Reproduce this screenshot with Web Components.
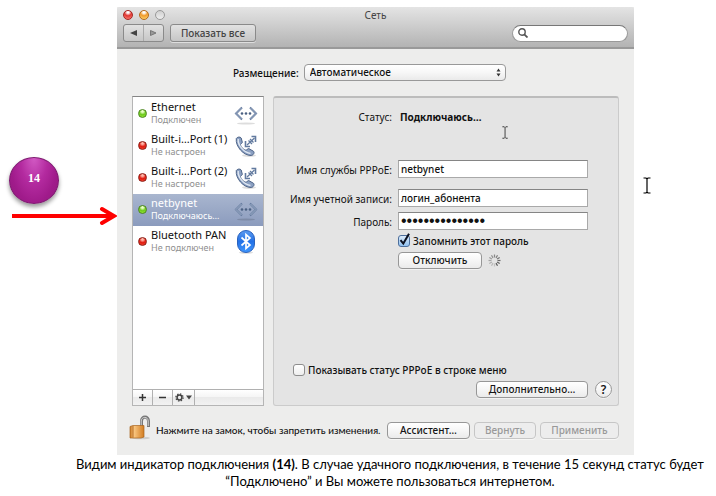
<!DOCTYPE html>
<html lang="ru">
<head>
<meta charset="utf-8">
<title>Сеть</title>
<style>
body { margin: 0; background: #fff; color: #111; font: 10px/16px "Noto Sans", "Open Sans", sans-serif; }
</style>
</head>
<body>
<guide-page></guide-page>

<script>
function define(name, html, setup) {
  customElements.define(name, class extends HTMLElement {
    connectedCallback() {
      if (this.shadowRoot) return;
      const root = this.attachShadow({ mode: 'open' });
      root.innerHTML = html;
      if (setup) setup(this, root);
    }
  });
}

/* Push button */
define('mac-button', `
<style>
:host { display: block; }
button { display: block; box-sizing: border-box; width: 100%; height: 17px; margin: 0; padding: 0 4px; border: 1px solid #979797; border-radius: 4px;
  background: linear-gradient(#fff, #f6f6f6 50%, #ebebeb); font: inherit; font-weight: 500; line-height: 15px; color: #151515; box-shadow: 0 1px 0 #fff8; text-align: center; white-space: nowrap; }
button:disabled { color: #999; border-color: #c6c6c6; background: #ededed; }
:host([kind=tool]) button { height: 18px; line-height: 16px; color: #444; border-color: #8a8a8a; border-radius: 3px; background: linear-gradient(#e2e2e2, #c6c6c6); }
:host([kind=round]) button { border-radius: 50%; padding: 0; font-size: 12px; font-weight: 600; }
</style>
<button type="button"><slot></slot></button>`, (host, root) => {
  const b = root.querySelector('button');
  b.disabled = host.hasAttribute('disabled');
});

/* Text field with a leading label */
define('mac-field', `
<style>
:host { display: grid; grid-template-columns: var(--label-col) 1fr; column-gap: 6px; align-items: center; }
label { text-align: right; white-space: nowrap; padding-top: 2px; line-height: 16px; }
input { box-sizing: border-box; width: 100%; min-width: 0; height: 18px; margin: 0; padding: 0 2px; border: 1px solid #a9a9a9; border-top-color: #858585; border-radius: 0; background: #fff; font: inherit; font-weight: 500; color: #111; outline: none; }
input[type=password] { font-size: 16px; font-family: "Liberation Sans", sans-serif; }
</style>
<label for="f"></label><input id="f">`, (host, root) => {
  root.querySelector('label').textContent = host.getAttribute('label');
  const i = root.querySelector('input');
  i.type = host.getAttribute('type') || 'text';
  i.value = host.getAttribute('value');
});

/* Tick box */
define('mac-check', `
<style>
:host { display: block; font-weight: 500; }
label { display: flex; align-items: center; gap: 3px; white-space: nowrap; }
input { appearance: none; flex: none; width: 12px; height: 12px; margin: 0; border: 1px solid #8d8d8d; border-radius: 3px; background: linear-gradient(#fff, #eee); }
input:checked { border-color: #4c6e9c; background: linear-gradient(#dcebfa, #8fc0ef); }
.box { display: grid; flex: none; }
.box > * { grid-area: 1 / 1; }
svg { display: none; width: 12px; height: 12px; overflow: visible; pointer-events: none; }
input:checked + svg { display: block; }
</style>
<label><span class="box"><input type="checkbox"><svg viewBox="0 0 12 12"><path d="M2.500 5.200L5.300 8.600L11-1.200" fill="none" stroke="#0b1020" stroke-width="2"/></svg></span><slot></slot></label>`,
(host, root) => { root.querySelector('input').checked = host.hasAttribute('checked'); });

/* Drawings of the service list */
const ICONS = {
  ethernet: `<svg width="24" height="24" viewBox="0 0 24 24"><g fill="none" stroke="#62789c" stroke-width="2"><path d="M8 5.500L2 11.500L8 17.500M16 5.500L22 11.500L16 17.500"/></g><g fill="none" stroke="#c2cfe2" stroke-width=".7"><path d="M7.500 6L2 11.500L7.500 17M16.500 6L22 11.500L16.500 17"/></g><g fill="#4c6183"><circle cx="8" cy="11.500" r="1.300"/><circle cx="12" cy="11.500" r="1.300"/><circle cx="16" cy="11.500" r="1.300"/></g><ellipse cx="12" cy="21.500" rx="9" ry="1" fill="#0002"/></svg>`,
  phone: `<svg width="24" height="24" viewBox="0 0 24 24"><ellipse cx="15" cy="21.500" rx="7" ry="1.500" fill="#0002"/><path d="M2.300 4.500C3 3 6.200 2.400 7.200 4L8.300 8.200C8.300 9.500 6.500 9.800 6.300 10.600C7 13.300 9.700 15.900 12 16.300C13 16 13.400 14.500 14.800 14.600L19.500 17.300C21 18.700 19.200 21.300 17.200 21.500C9.500 21.700 1.200 12.300 2.300 4.500Z" fill="#8ba0c2" stroke="#4e6488"/><path d="M4.200 5C3.500 11.500 10.300 18.700 16.500 19.500" fill="none" stroke="#dfe7f2" stroke-width="1.400"/><g fill="none" stroke="#627a9f" stroke-width="1.600"><path d="M11.500 7V12.500H16M17.500 2.500H21.500V8"/><path d="M13 11L20.500 4M14.500 6.500L18 10M16 5L19.500 8.500" stroke-width="1.300"/></g></svg>`,
  bluetooth: `<svg width="24" height="24" viewBox="0 0 24 24"><defs><linearGradient id="b" x2="0" y2="1"><stop stop-color="#5c9bf0"/><stop offset=".5" stop-color="#2371e6"/><stop offset="1" stop-color="#3f97ff"/></linearGradient></defs><ellipse cx="12" cy="22.500" rx="7" ry="1.300" fill="#0002"/><rect x="3.500" y=".5" width="17" height="22" rx="8.500" fill="url(#b)" stroke="#2a62bd"/><path d="M7.500 7.500L16 15L12 18.500V4.500L16 8L7.500 15.500" fill="none" stroke="#fff" stroke-width="1.700"/></svg>`
};
define('service-item', `
<style>
:host { display: grid; grid-template-columns: 12px 1fr 24px; column-gap: 3px; align-items: start; box-sizing: border-box; height: 32px; padding: 2px 5px 0 3px; }
:host([selected]) { background: linear-gradient(#a9b6cf, #8b9bbd); color: #fff; }
.led { justify-self: center; width: 7px; height: 7px; margin-top: 9px; border: 1px solid #8c1c14; border-radius: 50%; background: radial-gradient(circle at 50% 20%, #ffb9ac 0 12%, #e01b10 50%, #f54a35); }
:host([on]) .led { border-color: #49851b; background: radial-gradient(circle at 50% 20%, #eaffc8 0 12%, #6cc91a 50%, #a4f23f); }
b, small { display: block; white-space: nowrap; }
b { font-size: 11px; line-height: 14px; font-weight: 400; }
small { font-size: 9px; line-height: 11px; color: #909090; }
:host([selected]) small { color: #fff; }
.icon { margin-top: 2px; }
svg { display: block; }
</style>
<span class="led"></span><div><b></b><small></small></div><span class="icon"></span>`, (host, root) => {
  root.querySelector('b').textContent = host.getAttribute('name');
  root.querySelector('small').textContent = host.getAttribute('state');
  root.querySelector('.icon').innerHTML = ICONS[host.getAttribute('icon')];
});

/* Services column with its action bar */
define('service-list', `
<style>
:host { display: flex; flex-direction: column; box-sizing: border-box; border: 1px solid #b5b5b5; border-top-color: #858585; background: #fff; }
.items { flex: 1; padding-top: 1px; }
.bar { display: flex; height: 15px; border-top: 1px solid #b0b0b0; background: linear-gradient(#fff, #f5f5f5 48%, #eaeaea 50%, #f2f2f2); }
button { display: grid; place-items: center; width: 20px; margin: 0; padding: 0; border: 0; border-right: 1px solid #b0b0b0; background: none; }
button:last-child { width: 22px; }
</style>
<div class="items"><slot></slot></div>
<div class="bar">
<button type="button" aria-label="Добавить"><svg width="7" height="7"><path d="M0 3.500H7M3.500 0V7" stroke="#333" stroke-width="1.500"/></svg></button>
<button type="button" aria-label="Удалить"><svg width="7" height="7"><path d="M0 3.500H7" stroke="#333" stroke-width="1.500"/></svg></button>
<button type="button" aria-label="Действия"><svg width="17" height="9"><circle cx="4.500" cy="4.500" r="2.400" fill="none" stroke="#444" stroke-width="1.500"/><circle cx="4.500" cy="4.500" r="3.600" fill="none" stroke="#444" stroke-width="1.300" stroke-dasharray="1.400 1.430"/><path d="M11 2.500H17L14 6.500Z" fill="#444"/></svg></button>
</div>`);

/* I-beam pointer */
define('text-pointer', `
<style>:host { display: block; } svg { display: block; width: auto; height: var(--pointer-size, 17px); }</style>
<svg viewBox="0 0 8 17"><path d="M0.500 1H3L4 2L5 1H7.500M4 2V15M0.500 16H3L4 15L5 16H7.500" fill="none" stroke="currentColor" stroke-width="1.200"/></svg>`);

/* Busy indicator */
define('busy-spinner', `
<style>:host { display: block; } svg { display: block; }</style>
<svg width="13" height="13" viewBox="-6.500 -6.500 13 13"></svg>`, (host, root) => {
  let s = '';
  for (let i = 0; i < 12; i++) s += `<path d="M0-3V-6" stroke="#333" stroke-width="1.200" stroke-opacity="${(0.2 + 0.6 * ((i + 6) % 12) / 11).toFixed(2)}" transform="rotate(${i * 30})"/>`;
  root.querySelector('svg').innerHTML = s;
});

/* Window title bar with navigation and search */
define('window-header', `
<style>
:host { display: block; box-sizing: border-box; height: 42px; padding: 0 6px; border-bottom: 2px solid #999; background: linear-gradient(#e4e4e4, #b3b3b3); border-radius: 2px 2px 0 0; }
.title { display: grid; grid-template-columns: 1fr auto 1fr; align-items: center; height: 16px; color: #444; font-size: 10px; line-height: 16px; }
.lights { display: flex; gap: 6px; }
i { width: 8px; height: 8px; border: 1px solid #a52621; border-radius: 50%; background: radial-gradient(circle at 50% 15%, #fff 0 12%, #e23530 45%, #ff8a80); }
i:nth-child(2) { border-color: #b66a1c; background: radial-gradient(circle at 50% 15%, #fff 0 12%, #f29b2c 45%, #ffe07c); }
i:nth-child(3) { border-color: #999; background: linear-gradient(#d0d0d0, #eee); }
.tools { display: flex; align-items: center; gap: 6px; padding-top: 1px; }
.nav { display: flex; box-sizing: border-box; width: 41px; height: 18px; border: 1px solid #8a8a8a; border-radius: 3px; background: linear-gradient(#e2e2e2, #c6c6c6); }
.nav button { flex: 1; display: grid; place-items: center; padding: 0; border: 0; background: none; }
.nav button + button { box-shadow: -1px 0 #aaa; }
mac-button { width: 86px; }
.search { display: flex; align-items: center; box-sizing: border-box; width: 116px; height: 17px; margin-left: auto; padding: 0 5px; gap: 3px; border: 1px solid #999; border-top-color: #777; border-radius: 9px; background: #fff; }
.search input { flex: 1; min-width: 0; padding: 0; border: 0; background: none; font: inherit; outline: none; }
</style>
<div class="title"><span class="lights"><i></i><i></i><i></i></span><span>Сеть</span></div>
<div class="tools">
<div class="nav"><button type="button" aria-label="Назад"><svg width="7" height="6"><path d="M7 0V6L0 3Z" fill="#444"/></svg></button><button type="button" aria-label="Вперед"><svg width="7" height="6"><path d="M0.500 0.500V5.500L6 3Z" fill="#999" stroke="#777"/></svg></button></div>
<mac-button kind="tool">Показать все</mac-button>
<div class="search"><svg width="10" height="10"><circle cx="4" cy="4" r="3.200" fill="none" stroke="#555" stroke-width="1.400"/><path d="M6.300 6.300L9.500 9.500" stroke="#555" stroke-width="1.800"/></svg><input type="search" aria-label="Поиск"></div>
</div>`);

/* Placement pop-up */
define('place-select', `
<style>
:host { display: flex; align-items: center; gap: 5px; }
label { font-weight: 500; }
.wrap { display: grid; align-items: center; width: 202px; }
.wrap > * { grid-area: 1 / 1; }
select { appearance: none; width: 100%; height: 17px; margin: 0; padding: 0 5px; border: 1px solid #999; border-radius: 4px; background: linear-gradient(#fff, #f7f7f7 50%, #eaeaea); font: inherit; font-weight: 500; line-height: 15px; color: #111; }
svg { justify-self: end; margin-right: 5px; pointer-events: none; }
</style>
<label for="s">Размещение:</label>
<span class="wrap"><select id="s"><option>Автоматическое</option></select><svg width="5" height="9"><path d="M0.500 3.500L2.500 0.500L4.500 3.500ZM0.500 5.500L2.500 8.500L4.500 5.500Z" fill="#333"/></svg></span>`);

/* Settings of the selected service */
define('service-panel', `
<style>
:host { --label-col: 118px; display: flex; flex-direction: column; position: relative; box-sizing: border-box; border: 1px solid #cbcbcb; border-top: 2px solid #bcbcbc; border-radius: 3px; background: #e4e4e4; padding: 10px 6px 7px 0; }
.status { display: grid; grid-template-columns: var(--label-col) 1fr; column-gap: 8px; text-align: left; line-height: 18px; }
.status span { text-align: right; }
.status b { font-weight: 700; }
.fields { display: grid; padding: 34px 24px 0 0; }
mac-field + mac-field { margin-top: 11px; }
mac-field + mac-field + mac-field { margin-top: 5px; }
.after { display: grid; gap: 3px; padding: 3px 0 0 124px; }
.row { display: flex; align-items: center; gap: 6px; }
.row mac-button { width: 84px; }
.foot { margin-top: auto; }
.foot mac-check { padding-left: 19px; }
.foot .row { justify-content: flex-end; margin-top: 3px; gap: 7px; }
.foot .row mac-button { width: 112px; }
.foot .row mac-button[kind=round] { width: 17px; }
text-pointer { --pointer-size: 13px; position: absolute; left: 228px; top: 28px; color: #333; }
</style>
<div class="status"><span>Статус:</span><b>Подключаюсь…</b></div>
<div class="fields">
<mac-field label="Имя службы PPPoE:" value="netbynet"></mac-field>
<mac-field label="Имя учетной записи:" value="логин_абонента"></mac-field>
<mac-field label="Пароль:" type="password" value="abonentabonenta"></mac-field>
</div>
<div class="after">
<mac-check checked>Запомнить этот пароль</mac-check>
<div class="row"><mac-button>Отключить</mac-button><busy-spinner></busy-spinner></div>
</div>
<div class="foot">
<mac-check>Показывать статус PPPoE в строке меню</mac-check>
<div class="row"><mac-button>Дополнительно…</mac-button><mac-button kind="round">?</mac-button></div>
</div>
<text-pointer></text-pointer>`);

/* Lock and the window's main buttons */
define('window-footer', `
<style>
:host { display: flex; align-items: center; padding: 9px 15px 15px 12px; }
svg { display: block; flex: none; }
p { flex: 1; margin: 4px 0 0 5px; font-family: Lato, "Noto Sans", sans-serif; font-weight: 500; white-space: nowrap; }
.buttons { display: flex; gap: 4px; margin-top: 5px; }
mac-button { width: 83px; }
mac-button:nth-child(2) { width: 62px; }
mac-button:nth-child(3) { width: 79px; }
</style>
<svg width="22" height="25" viewBox="0 0 22 25"><defs><linearGradient id="g"><stop stop-color="#c97923"/><stop offset=".3" stop-color="#f9c680"/><stop offset="1" stop-color="#d27c20"/></linearGradient></defs><ellipse cx="12" cy="23" rx="9" ry="1.300" fill="#0002"/><path d="M12.500 12V6C12.500 .6 19.500 .6 19.500 6V12" fill="none" stroke="#777" stroke-width="3"/><path d="M12.200 11V6C12.500 1.200 19 1.200 19.200 6V11" fill="none" stroke="#d5d5d5"/><path d="M1 11.500L4 10.500H15V22L12 23H1Z" fill="url(#g)" stroke="#a76420" stroke-width=".7"/><path d="M4 11V22.500" stroke="#a9601b" stroke-width=".7"/></svg>
<p>Нажмите на замок, чтобы запретить изменения.</p>
<div class="buttons"><mac-button>Ассистент…</mac-button><mac-button disabled>Вернуть</mac-button><mac-button disabled>Применить</mac-button></div>`);

/* Network preferences window */
define('net-window', `
<style>
:host { display: block; background: #ededec; }
place-select { padding: 15px 0 15px 116px; }
.main { display: grid; grid-template-columns: 132px 1fr; column-gap: 9px; padding: 0 15px; min-height: 310px; }
</style>
<window-header></window-header>
<place-select></place-select>
<div class="main">
<service-list>
<service-item on name="Ethernet" state="Подключен" icon="ethernet"></service-item>
<service-item name="Built-i…Port (1)" state="Не настроен" icon="phone"></service-item>
<service-item name="Built-i…Port (2)" state="Не настроен" icon="phone"></service-item>
<service-item on selected name="netbynet" state="Подключаюсь…" icon="ethernet"></service-item>
<service-item name="Bluetooth PAN" state="Не подключен" icon="bluetooth"></service-item>
</service-list>
<service-panel></service-panel>
</div>
<window-footer></window-footer>`);

/* Numbered callout and its arrow */
define('step-mark', `
<style>
:host { display: block; }
.ball { display: grid; place-items: center; box-sizing: border-box; width: 50px; height: 47px; margin-left: 9px; padding-bottom: 6px; border: 1px solid #7e1a70; border-radius: 50%; background: radial-gradient(ellipse at 50% 0, #d25ac4 0, #b32a9f 40%, #a01b8b 70%, #94197f); box-shadow: 0 3px 4px #0006; color: #fff; font: bold 12px/16px "Liberation Serif", serif; }
svg { display: block; margin: 2px 0 0 12px; }
</style>
<div class="ball">14</div>
<svg width="105" height="20" viewBox="0 0 105 20"><path d="M0 10H100" stroke="#f00" stroke-width="4"/><path d="M90 3L102 10L90 17" fill="none" stroke="#f00" stroke-width="4" stroke-linecap="round"/></svg>`);

define('guide-page', `
<style>
:host { display: block; padding-top: 7px; }
.scene { display: grid; grid-template-columns: 117px 1fr 82px; }
step-mark { padding-top: 150px; }
.scene > text-pointer { padding: 170px 0 0 9px; color: #000; }
p { margin: 1px 10px 0 74px; text-align: center; color: #000; font: 13px/17px Lato, "Noto Sans", sans-serif; }
</style>
<div class="scene"><step-mark></step-mark><net-window></net-window><text-pointer></text-pointer></div>
<p>Видим индикатор подключения <b>(14)</b>. В случае удачного подключения, в течение 15 секунд статус будет<br>“Подключено” и Вы можете пользоваться интернетом.</p>`);
</script>
</body>
</html>
